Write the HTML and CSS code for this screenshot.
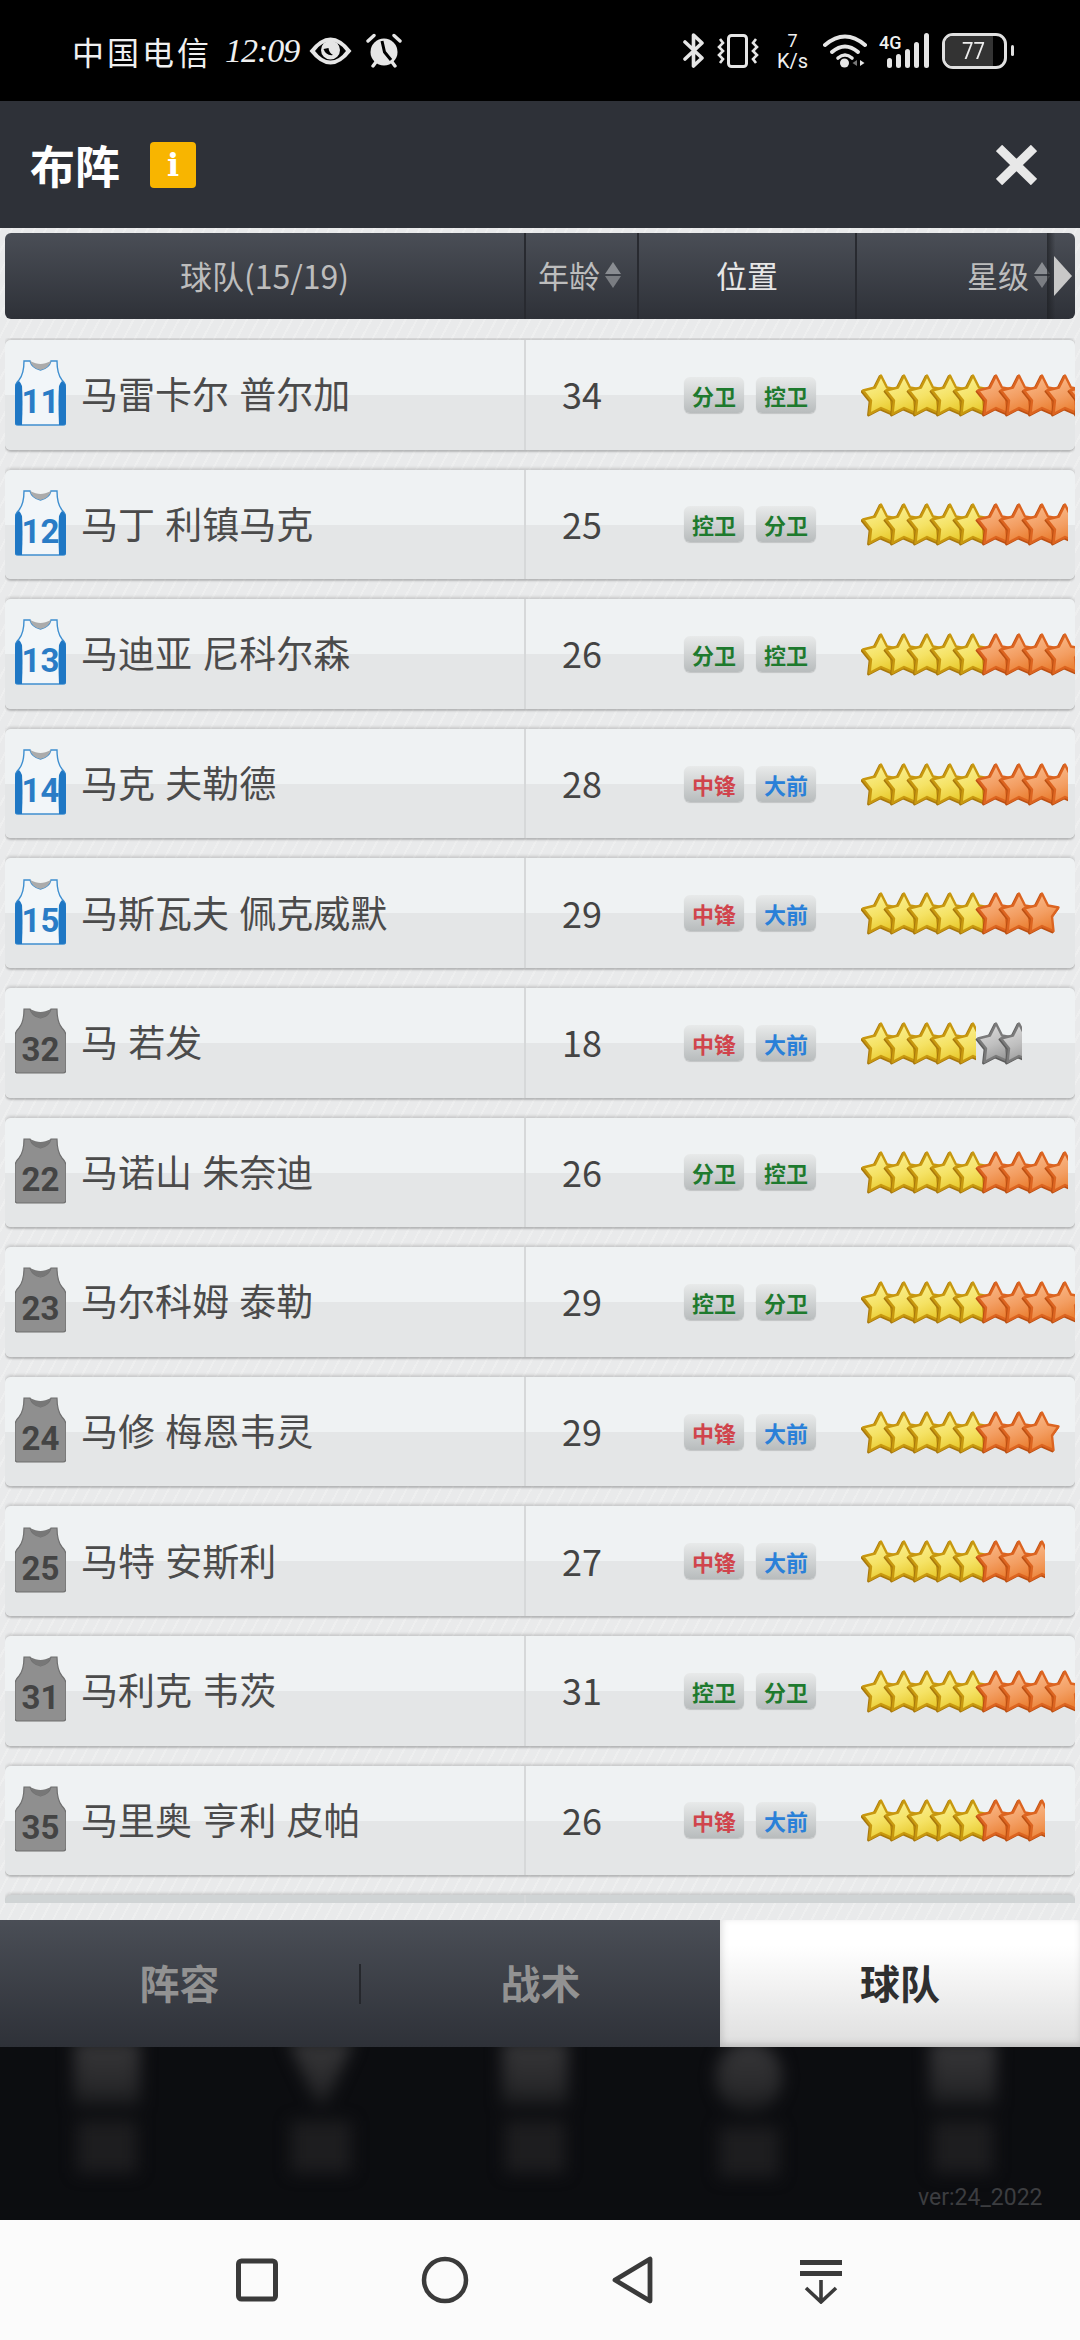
FILE: index.html
```html
<!DOCTYPE html>
<html lang="zh">
<head>
<meta charset="utf-8">
<title>布阵</title>
<link rel="stylesheet" href="styles.css">
</head>
<body>
<svg class="defs" width="0" height="0" aria-hidden="true">
  <defs>
    <linearGradient id="gy" x1="0.2" y1="0" x2="0.6" y2="1"><stop offset="0" stop-color="#faf29a"/><stop offset="0.55" stop-color="#f5e264"/><stop offset="1" stop-color="#e8c92c"/></linearGradient>
    <linearGradient id="go" x1="0.2" y1="0" x2="0.6" y2="1"><stop offset="0" stop-color="#fabd90"/><stop offset="0.55" stop-color="#f39e62"/><stop offset="1" stop-color="#ea7e30"/></linearGradient>
    <linearGradient id="gg" x1="0.2" y1="0" x2="0.6" y2="1"><stop offset="0" stop-color="#dedede"/><stop offset="0.55" stop-color="#bfbfbf"/><stop offset="1" stop-color="#989898"/></linearGradient>
    <path id="shape" d="M20 2.5 L26 14.5 L36.5 16.5 L30 25.5 L31.5 40 L20 35 L8.5 41 L10 27.5 L2 17.5 L14 14.5 Z"/>
    <g id="sy"><use href="#shape" x="-1" y="1" fill="#a8780c" stroke="#a8780c" stroke-width="2.8" stroke-linejoin="round"/><use href="#shape" fill="url(#gy)" stroke="#c8980f" stroke-width="2.4" stroke-linejoin="round"/></g>
    <g id="so"><use href="#shape" x="-1" y="1" fill="#bb4f12" stroke="#bb4f12" stroke-width="2.8" stroke-linejoin="round"/><use href="#shape" fill="url(#go)" stroke="#dc6420" stroke-width="2.4" stroke-linejoin="round"/></g>
    <g id="sg"><use href="#shape" x="-1" y="1" fill="#5c5c5c" stroke="#5c5c5c" stroke-width="2.8" stroke-linejoin="round"/><use href="#shape" fill="url(#gg)" stroke="#7a7a7a" stroke-width="2.4" stroke-linejoin="round"/></g>
    <g id="y5"><use href="#sy"/><use href="#sy" x="23"/><use href="#sy" x="46"/><use href="#sy" x="69"/><use href="#sy" x="92"/></g>
    <g id="o5"><use href="#so" x="115"/><use href="#so" x="138"/><use href="#so" x="161"/><use href="#so" x="184"/><use href="#so" x="207"/></g>
    <g id="o4"><use href="#so" x="115"/><use href="#so" x="138"/><use href="#so" x="161"/><use href="#so" x="184"/></g>
    <g id="o3"><use href="#so" x="115"/><use href="#so" x="138"/><use href="#so" x="161"/></g>
    <g id="g2"><use href="#sg" x="115"/><use href="#sg" x="138"/></g>
    <g id="jersey-blue">
      <path d="M9 1 L15 1 Q17 8 25.5 10 Q34 8 36 1 L42 1 Q42 14 47 20 Q51 24 51 28 L51 62 Q51 65 48 65 L3 65 Q0 65 0 62 L0 28 Q0 24 4 20 Q9 14 9 1 Z" fill="#f2f6f9" stroke="#3f8fd0" stroke-width="1.4"/>
      <path d="M15 1 Q17 8 25.5 10 Q34 8 36 1 Q30 4 25.5 4 Q21 4 15 1 Z" fill="#ababab"/>
      <path d="M4 21 Q0 24 0 28 L0 62 Q0 65 3 65 L7 65 Q8 40 7 26 Q6 23 4 21 Z" fill="#1f77c4"/>
      <path d="M47 21 Q51 24 51 28 L51 62 Q51 65 48 65 L44 65 Q43 40 44 26 Q45 23 47 21 Z" fill="#1f77c4"/>
    </g>
    <g id="jersey-grey">
      <path d="M9 1 L15 1 Q17 8 25.5 10 Q34 8 36 1 L42 1 Q42 14 47 20 Q51 24 51 28 L51 62 Q51 65 48 65 L3 65 Q0 65 0 62 L0 28 Q0 24 4 20 Q9 14 9 1 Z" fill="#8f8f8f" stroke="#6f6f6f" stroke-width="1.2"/>
      <path d="M15 1 Q17 8 25.5 10 Q34 8 36 1 Q30 4 25.5 4 Q21 4 15 1 Z" fill="#777"/>
    </g>
  </defs>
</svg>

<div class="screen">
  <div class="statusbar">
    <div class="status-left">
      <span class="carrier">中国电信</span>
      <span class="clock">12:09</span>
      <svg class="ic-eye" viewBox="0 0 45 30"><path d="M1.5 15 Q12 1.5 22.5 1.5 Q33 1.5 43.5 15 Q33 28.5 22.5 28.5 Q12 28.5 1.5 15 Z" fill="#e6e6e6"/><path d="M7 15 Q14 5.5 22.5 5.5 Q31 5.5 38 15 Q31 24.5 22.5 24.5 Q14 24.5 7 15 Z" fill="#000"/><circle cx="22.5" cy="14" r="9.5" fill="#e6e6e6"/><path d="M15.5 13 Q18 20 25 19 Q21 17 20.5 12 Z" fill="#000"/></svg>
      <svg class="ic-alarm" viewBox="0 0 36 36"><circle cx="18" cy="19" r="13.5" fill="#e6e6e6"/><path d="M2 8 L8 2.5 M34 8 L28 2.5 M7 33 L10 29 M29 33 L26 29" stroke="#e6e6e6" stroke-width="3.4" stroke-linecap="round"/><path d="M16 8 L18.5 19 L25 27" fill="none" stroke="#000" stroke-width="3"/></svg>
    </div>
    <div class="status-right">
      <svg class="ic-bt" viewBox="0 0 22 35"><path d="M2 9 L19 25 L10.5 33 L10.5 17 M10.5 17 L10.5 2 L19 10 L2 26" fill="none" stroke="#e6e6e6" stroke-width="3.6" stroke-linejoin="round" stroke-linecap="round"/></svg>
      <svg class="ic-vib" viewBox="0 0 42 34"><rect x="11.5" y="1.5" width="18" height="31" rx="3" fill="none" stroke="#e6e6e6" stroke-width="3"/><path d="M3 5 L6 9 L2 13 L6 17 L2 21 L6 25 L3 29 M39 5 L36 9 L40 13 L36 17 L40 21 L36 25 L39 29" fill="none" stroke="#e6e6e6" stroke-width="2.6"/></svg>
      <div class="speed"><span class="speed-num">7</span><span class="speed-unit">K/s</span></div>
      <svg class="ic-wifi" viewBox="0 0 44 35"><path d="M2 12 Q22 -5 42 12" fill="none" stroke="#e6e6e6" stroke-width="4" stroke-linecap="round"/><path d="M9 19 Q22 8 35 19" fill="none" stroke="#e6e6e6" stroke-width="4" stroke-linecap="round"/><path d="M15 25 Q22 19 29 25" fill="none" stroke="#e6e6e6" stroke-width="3.6" stroke-linecap="round"/><circle cx="21.5" cy="30" r="4.5" fill="#e6e6e6"/><path d="M34 27 L34 33 L29.5 30 Z" fill="#777"/><path d="M37 27 L37 33 L41.5 30 Z" fill="#e6e6e6"/></svg>
      <div class="signal">
        <span class="net">4G</span>
        <svg class="ic-bars" viewBox="0 0 42 35"><g fill="#e6e6e6"><rect x="0" y="25" width="5" height="10" rx="2.5"/><rect x="9" y="21" width="5" height="14" rx="2.5"/><rect x="18" y="16" width="5" height="19" rx="2.5"/><rect x="27" y="9" width="5" height="26" rx="2.5"/><rect x="37" y="0" width="5" height="35" rx="2.5"/></g></svg>
      </div>
      <div class="battery"><span class="battery-fill"><span class="battery-num">77</span></span></div>
      <span class="battery-tip"></span>
    </div>
  </div>

  <header class="topbar">
    <div class="title-wrap">
      <h1 class="title">布阵</h1>
      <span class="info">i</span>
    </div>
    <svg class="ic-close" viewBox="0 0 41 40"><path d="M3 3 L38 37 M38 3 L3 37" stroke="#e8e8e8" stroke-width="9"/></svg>
  </header>

  <main class="content">
    <div class="thead">
      <div class="th th-team">球队(15/19)</div>
      <div class="th th-age">年龄<span class="sort"></span></div>
      <div class="th th-pos">位置</div>
      <div class="th th-star">星级<span class="sort"></span></div>
      <div class="more"><span class="more-arrow"></span></div>
    </div>
    <div class="list">

      <div class="row">
        <div class="cell-name"><svg class="jersey" viewBox="0 0 51 66"><use href="#jersey-blue"/><text x="25.5" y="53" class="num num-blue">11</text></svg><span class="name">马雷卡尔 普尔加</span></div>
        <div class="cell-age">34</div>
        <div class="cell-pos"><span class="tag green">分卫</span><span class="tag green">控卫</span></div>
        <svg class="stars w-clip" viewBox="0 0 214 44"><use href="#y5"/><use href="#o5"/></svg>
      </div>

      <div class="row">
        <div class="cell-name"><svg class="jersey" viewBox="0 0 51 66"><use href="#jersey-blue"/><text x="25.5" y="53" class="num num-blue">12</text></svg><span class="name">马丁 利镇马克</span></div>
        <div class="cell-age">25</div>
        <div class="cell-pos"><span class="tag green">控卫</span><span class="tag green">分卫</span></div>
        <svg class="stars w-half9" viewBox="0 0 207 44"><use href="#y5"/><use href="#o4"/></svg>
      </div>

      <div class="row">
        <div class="cell-name"><svg class="jersey" viewBox="0 0 51 66"><use href="#jersey-blue"/><text x="25.5" y="53" class="num num-blue">13</text></svg><span class="name">马迪亚 尼科尔森</span></div>
        <div class="cell-age">26</div>
        <div class="cell-pos"><span class="tag green">分卫</span><span class="tag green">控卫</span></div>
        <svg class="stars w-clip" viewBox="0 0 214 44"><use href="#y5"/><use href="#o4"/></svg>
      </div>

      <div class="row">
        <div class="cell-name"><svg class="jersey" viewBox="0 0 51 66"><use href="#jersey-blue"/><text x="25.5" y="53" class="num num-blue">14</text></svg><span class="name">马克 夫勒德</span></div>
        <div class="cell-age">28</div>
        <div class="cell-pos"><span class="tag red">中锋</span><span class="tag blue">大前</span></div>
        <svg class="stars w-half9" viewBox="0 0 207 44"><use href="#y5"/><use href="#o4"/></svg>
      </div>

      <div class="row">
        <div class="cell-name"><svg class="jersey" viewBox="0 0 51 66"><use href="#jersey-blue"/><text x="25.5" y="53" class="num num-blue">15</text></svg><span class="name">马斯瓦夫 佩克威默</span></div>
        <div class="cell-age">29</div>
        <div class="cell-pos"><span class="tag red">中锋</span><span class="tag blue">大前</span></div>
        <svg class="stars w-full8" viewBox="0 0 204 44"><use href="#y5"/><use href="#o3"/></svg>
      </div>

      <div class="row">
        <div class="cell-name"><svg class="jersey" viewBox="0 0 51 66"><use href="#jersey-grey"/><text x="25.5" y="53" class="num num-grey">32</text></svg><span class="name">马 若发</span></div>
        <div class="cell-age">18</div>
        <div class="cell-pos"><span class="tag red">中锋</span><span class="tag blue">大前</span></div>
        <svg class="stars w-half7" viewBox="0 0 161 44"><svg width="115" height="44"><use href="#y5"/></svg><use href="#g2"/></svg>
      </div>

      <div class="row">
        <div class="cell-name"><svg class="jersey" viewBox="0 0 51 66"><use href="#jersey-grey"/><text x="25.5" y="53" class="num num-grey">22</text></svg><span class="name">马诺山 朱奈迪</span></div>
        <div class="cell-age">26</div>
        <div class="cell-pos"><span class="tag green">分卫</span><span class="tag green">控卫</span></div>
        <svg class="stars w-half9" viewBox="0 0 207 44"><use href="#y5"/><use href="#o4"/></svg>
      </div>

      <div class="row">
        <div class="cell-name"><svg class="jersey" viewBox="0 0 51 66"><use href="#jersey-grey"/><text x="25.5" y="53" class="num num-grey">23</text></svg><span class="name">马尔科姆 泰勒</span></div>
        <div class="cell-age">29</div>
        <div class="cell-pos"><span class="tag green">控卫</span><span class="tag green">分卫</span></div>
        <svg class="stars w-clip" viewBox="0 0 214 44"><use href="#y5"/><use href="#o4"/></svg>
      </div>

      <div class="row">
        <div class="cell-name"><svg class="jersey" viewBox="0 0 51 66"><use href="#jersey-grey"/><text x="25.5" y="53" class="num num-grey">24</text></svg><span class="name">马修 梅恩韦灵</span></div>
        <div class="cell-age">29</div>
        <div class="cell-pos"><span class="tag red">中锋</span><span class="tag blue">大前</span></div>
        <svg class="stars w-full8" viewBox="0 0 204 44"><use href="#y5"/><use href="#o3"/></svg>
      </div>

      <div class="row">
        <div class="cell-name"><svg class="jersey" viewBox="0 0 51 66"><use href="#jersey-grey"/><text x="25.5" y="53" class="num num-grey">25</text></svg><span class="name">马特 安斯利</span></div>
        <div class="cell-age">27</div>
        <div class="cell-pos"><span class="tag red">中锋</span><span class="tag blue">大前</span></div>
        <svg class="stars w-half8" viewBox="0 0 184 44"><use href="#y5"/><use href="#o3"/></svg>
      </div>

      <div class="row">
        <div class="cell-name"><svg class="jersey" viewBox="0 0 51 66"><use href="#jersey-grey"/><text x="25.5" y="53" class="num num-grey">31</text></svg><span class="name">马利克 韦茨</span></div>
        <div class="cell-age">31</div>
        <div class="cell-pos"><span class="tag green">控卫</span><span class="tag green">分卫</span></div>
        <svg class="stars w-clip" viewBox="0 0 214 44"><use href="#y5"/><use href="#o4"/></svg>
      </div>

      <div class="row">
        <div class="cell-name"><svg class="jersey" viewBox="0 0 51 66"><use href="#jersey-grey"/><text x="25.5" y="53" class="num num-grey">35</text></svg><span class="name">马里奥 亨利 皮帕</span></div>
        <div class="cell-age">26</div>
        <div class="cell-pos"><span class="tag red">中锋</span><span class="tag blue">大前</span></div>
        <svg class="stars w-half8" viewBox="0 0 184 44"><use href="#y5"/><use href="#o3"/></svg>
      </div>

      <div class="row row-dim">
        <div class="cell-name"></div>
      </div>
    </div>
  </main>

  <nav class="tabs">
    <div class="tabs-dark">
      <div class="tab">阵容</div>
      <div class="tab-sep"></div>
      <div class="tab">战术</div>
    </div>
    <div class="tab tab-active">球队</div>
  </nav>

  <div class="dock">
    <div class="dock-icons">
      <div class="ghost"><span class="ghost-icon"></span><span class="ghost-label"></span></div>
      <div class="ghost"><span class="ghost-icon ghost-v"></span><span class="ghost-label"></span></div>
      <div class="ghost"><span class="ghost-icon"></span><span class="ghost-label"></span></div>
      <div class="ghost"><span class="ghost-icon ghost-round"></span><span class="ghost-label"></span></div>
      <div class="ghost"><span class="ghost-icon"></span><span class="ghost-label"></span></div>
    </div>
    <div class="version">ver:24_2022</div>
  </div>

  <div class="navbar">
    <div class="nav-slot"><svg class="nav-ic" viewBox="0 0 42 48"><rect x="2.5" y="5" width="37" height="38" rx="3" fill="none" stroke="#3a3a3a" stroke-width="5"/></svg></div>
    <div class="nav-slot"><svg class="nav-ic" viewBox="0 0 48 48"><circle cx="24" cy="24" r="21" fill="none" stroke="#3a3a3a" stroke-width="4.5"/></svg></div>
    <div class="nav-slot"><svg class="nav-ic" viewBox="0 0 42 48"><path d="M38 3 L38 45 L3 24 Z" fill="none" stroke="#3a3a3a" stroke-width="4.8" stroke-linejoin="round"/></svg></div>
    <div class="nav-slot"><svg class="nav-ic" viewBox="0 0 44 48"><path d="M1 4 H43 V9 H1 Z M1 15 H43 V20 H1 Z" fill="#3a3a3a"/><path d="M22 24 V46 M7 32 L22 46 L37 32" fill="none" stroke="#3a3a3a" stroke-width="3.6"/></svg></div>
  </div>
</div>
</body>
</html>
```
FILE: styles.css
```css
* { box-sizing: border-box; }
html, body { margin: 0; padding: 0; background: #000; }
body { font-family: "Noto Sans CJK SC", "Noto Sans", sans-serif; }
.defs { position: absolute; }

.screen { width: 1080px; height: 2340px; display: flex; flex-direction: column; overflow: hidden; }

/* status bar */
.statusbar { height: 101px; background: #000; display: flex; justify-content: space-between; align-items: center; padding: 0 66px 0 72px; color: #f0f0f0; flex: none; }
.status-left { display: flex; align-items: center; }
.carrier { font-size: 32px; font-weight: 400; letter-spacing: 3px; width: 153px; line-height: 36px; }
.clock { font-family: "Liberation Serif", serif; font-style: italic; font-size: 34px; letter-spacing: -1px; width: 83px; line-height: 36px; }
.ic-eye { width: 45px; height: 30px; margin-right: 13px; }
.ic-alarm { width: 36px; height: 36px; }
.status-right { display: flex; align-items: center; height: 36px; }
.ic-bt { width: 22px; height: 35px; margin-right: 12px; }
.ic-vib { width: 42px; height: 34px; margin-right: 17px; }
.speed { width: 33px; margin-right: 14px; display: flex; flex-direction: column; align-items: center; font-family: "Roboto", sans-serif; }
.speed-num { font-size: 18px; line-height: 20px; }
.speed-unit { font-size: 20px; line-height: 20px; }
.ic-wifi { width: 44px; height: 35px; margin-right: 12px; }
.signal { width: 50px; height: 35px; margin-right: 13px; display: flex; position: relative; justify-content: flex-end; }
.net { position: absolute; left: 0; top: 1px; font-family: "Roboto", sans-serif; font-weight: 500; font-size: 18px; line-height: 18px; }
.ic-bars { width: 42px; height: 35px; }
.battery { width: 65px; height: 36px; border: 3px solid #e0e0e0; border-radius: 11px; overflow: hidden; margin-right: 4px; }
.battery-fill { display: flex; height: 100%; width: 48px; background: #333; align-items: center; justify-content: flex-end; padding-right: 6px; }
.battery-num { font-family: "Roboto", sans-serif; font-size: 24px; line-height: 30px; color: #eee; transform: scaleX(0.85); }
.battery-tip { width: 3px; height: 11px; background: #e0e0e0; border-radius: 2px; }

/* top bar */
.topbar { height: 127px; background: #2e3138; display: flex; justify-content: space-between; align-items: center; padding: 0 43px 0 30px; flex: none; }
.title-wrap { display: flex; align-items: center; }
.title { margin: 0; font-size: 45px; line-height: 50px; font-weight: 700; color: #fff; width: 120px; }
.info { width: 46px; height: 46px; background: #f8b500; border-radius: 4px; color: #fff; font-family: "DejaVu Serif", serif; font-weight: 700; font-size: 32px; line-height: 46px; text-align: center; }
.ic-close { width: 41px; height: 40px; }

/* content */
.content { flex: 1; min-height: 0; padding: 5px 5px 17px; display: flex; flex-direction: column; background-color: #e9eaeb; background-image: repeating-linear-gradient(118deg, rgba(255,255,255,0.22) 0 2px, rgba(0,0,0,0) 2px 10px); }
.thead { height: 86px; flex: none; display: flex; border-radius: 6px; background: linear-gradient(#4a4e56, #2e3138); position: relative; overflow: hidden; font-size: 31px; color: #bdbdbd; }
.th { display: flex; align-items: center; justify-content: center; border-right: 2px solid #282a30; padding-bottom: 3px; }
.th-team { width: 521px; font-size: 32px; }
.th-age { width: 113px; padding-left: 12px; justify-content: flex-start; }
.th-pos { width: 218px; color: #e6e6e6; }
.th-star { flex: 1; border-right: 0; justify-content: flex-start; padding-left: 110px; }
.sort { width: 17px; margin-left: 5px; flex: none; display: flex; flex-direction: column; gap: 2px; }
.sort::before, .sort::after { content: ""; width: 0; height: 0; border-style: solid; }
.sort::before { border-width: 0 8.5px 12px 8.5px; border-color: transparent transparent #8a8d92 transparent; }
.sort::after { border-width: 12px 8.5px 0 8.5px; border-color: #7a7d82 transparent transparent transparent; }
.more { position: absolute; right: 0; top: 0; bottom: 0; width: 28px; display: flex; align-items: center; justify-content: flex-end; padding-right: 3px; background: linear-gradient(to right, rgba(30,32,36,0.75), rgba(30,32,36,0) 30%); }
.more-arrow { width: 0; height: 0; border-style: solid; border-width: 20px 0 20px 18px; border-color: transparent transparent transparent #c8c8c8; }

.list { margin-top: 19px; padding: 2px 0 4px; flex: 1; min-height: 0; overflow: hidden; display: flex; flex-direction: column; gap: 20px; }
.row { height: 109.6px; flex: none; display: flex; align-items: center; border-radius: 6px; background: linear-gradient(#eff2f3 0 50%, #e4e6e7 50% 100%); box-shadow: 0 -2px 3px rgba(0,0,0,0.14), 0 2px 2px rgba(0,0,0,0.22); overflow: hidden; }
.row-dim { background: #d0d4d5; }
.cell-name { width: 521px; height: 100%; flex: none; display: flex; align-items: center; padding-left: 10px; border-right: 2px solid #d6d8d9; }
.jersey { width: 51px; height: 66px; flex: none; margin: 0 15px 3px 0; }
.num { font-family: "Roboto", sans-serif; font-weight: 700; font-size: 33px; text-anchor: middle; }
.num-blue { fill: #2a7cc6; }
.num-grey { fill: #444; }
.name { font-size: 37px; line-height: 44px; color: #4b4b4b; white-space: nowrap; word-spacing: 2px; margin-bottom: 3px; }
.cell-age { width: 112px; flex: none; text-align: center; font-size: 36px; color: #444; line-height: 44px; margin-bottom: 3px; }
.cell-pos { width: 223px; flex: none; display: flex; gap: 12px; padding-left: 46px; }
.tag { width: 60px; height: 36px; border-radius: 6px; display: flex; align-items: center; justify-content: center; font-size: 22px; font-weight: 700; line-height: 36px; background: linear-gradient(#e8eaea, #b8bcbd); box-shadow: 0 1px 1px rgba(0,0,0,0.15); }
.green { color: #1e7a2e; }
.red { color: #d0444c; }
.blue { color: #2a80d8; }
.stars { height: 44px; flex: none; display: block; overflow: hidden; }
.w-clip { width: 214px; }
.w-half9 { width: 207px; }
.w-full8 { width: 204px; }
.w-half8 { width: 184px; }
.w-half7 { width: 161px; }

/* tabs */
.tabs { height: 127px; flex: none; display: flex; }
.tabs-dark { width: 720px; display: flex; align-items: center; background: linear-gradient(#4a4e56, #2e3138); }
.tab { flex: 1; height: 100%; display: flex; align-items: center; justify-content: center; font-size: 40px; font-weight: 700; color: #929292; padding-bottom: 3px; }
.tab-sep { width: 2px; height: 40px; background: #25272c; flex: none; }
.tab-active { flex: none; width: 360px; color: #2f2f2f; background: linear-gradient(#ffffff 20%, #dedede); box-shadow: inset 0 -4px 6px rgba(0,0,0,0.1), inset 4px 0 6px rgba(0,0,0,0.06); }

/* dock */
.dock { height: 173px; flex: none; background: #0c0d10; position: relative; overflow: hidden; }
.dock-icons { display: flex; }
.ghost { width: 214px; height: 130px; display: flex; flex-direction: column; align-items: center; filter: blur(8px); }
.ghost-icon { width: 66px; height: 66px; background: linear-gradient(#363638, #2a2a2c 65%, #17181a); margin-top: -6px; }
.ghost-v { clip-path: polygon(0 0, 100% 0, 55% 100%, 45% 100%); }
.ghost-round { border-radius: 50%; height: 76px; }
.ghost-label { width: 60px; height: 52px; margin-top: 14px; background: #1d1d1f; }
.version { position: absolute; top: 138px; left: 918px; font-family: "Roboto", sans-serif; font-size: 23px; line-height: 26px; color: #3c3d40; }

/* nav */
.navbar { height: 120px; flex: none; background: #fbfbfb; display: flex; justify-content: center; align-items: center; padding-right: 2px; }
.nav-slot { width: 188px; display: flex; justify-content: center; }
.nav-ic { height: 48px; width: 48px; }
```
